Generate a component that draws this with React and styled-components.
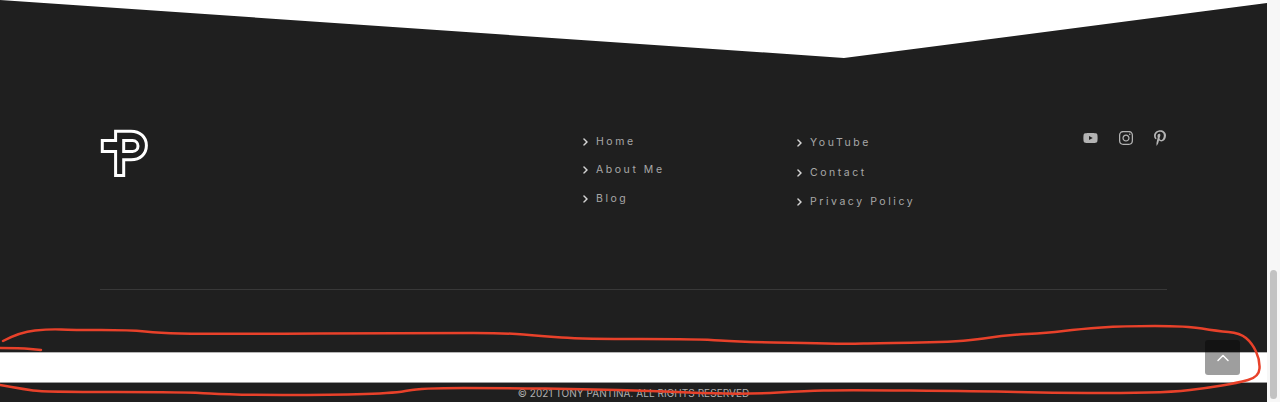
import React from "react";
import styled, { createGlobalStyle } from "styled-components";
import { FaYoutube, FaPinterestP, FaInstagram } from "react-icons/fa";
import { FaChevronRight } from "react-icons/fa6";
import { ChevronUp } from "lucide-react";

const Global = createGlobalStyle`
  html, body { margin: 0; padding: 0; height: 402px; overflow: hidden; background: #fff; }
  #root { height: 402px; }
  a { text-decoration: none; color: inherit; }
`;

const Page = styled.div`
  position: relative;
  display: flex;
  width: 1280px;
  height: 402px;
  overflow: hidden;
  font-family: Inter, "Liberation Sans", sans-serif;
`;
const Main = styled.div`
  width: 1267px;
  display: flex;
  flex-direction: column;
`;
const Footer = styled.footer`
  height: 352px;
  box-sizing: border-box;
  padding: 127px 100px 0;
  background: #1f1f1f;
  clip-path: polygon(0 0, 844px 58px, 100% 3px, 100% 100%, 0 100%);
  display: flex;
  flex-direction: column;
`;
const Columns = styled.div`
  display: grid;
  grid-template-columns: 482px 214px 1fr auto;
  height: 162px;
  border-bottom: 1px solid #383838;
`;
const Logo = styled.svg`
  display: block;
  width: 50px;
  height: 50px;
  margin-top: 2px;
`;
const LinkList = styled.ul`
  list-style: none;
  margin: 0;
  padding: ${(p) => p.$top}px 0 0;
  display: flex;
  flex-direction: column;
  gap: ${(p) => p.$gap}px;
`;
const LinkItem = styled.li`
  display: flex;
  align-items: center;
  gap: 8px;
  height: 14px;
  font-size: 10.5px;
  line-height: 14px;
  letter-spacing: 2.55px;
  color: #a8a8a8;
  font-weight: 400;
  white-space: nowrap;
  svg {
    width: 6px;
    height: 8px;
    color: #e8e8e8;
    flex: none;
    stroke: currentColor;
    stroke-width: 30;
  }
`;
const Social = styled.div`
  display: flex;
  align-items: flex-start;
  gap: 21px;
  padding: 3px 1px 0 0;
  color: #b3b3b3;
`;
const SocialIcon = styled.a`
  display: block;
  height: 16px;
  svg { display: block; width: ${(p) => p.$w}px; height: 16px; }
`;
const Band = styled.div`
  height: 31px;
  background: #fff;
  border-top: 1px solid #b5b5b5;
  border-bottom: 1px solid #9a9a9a;
  box-sizing: border-box;
`;
const Bottom = styled.div`
  height: 19px;
  background: #1f1f1f;
  display: flex;
  justify-content: center;
  padding-top: 3px;
  box-sizing: border-box;
`;
const Copy = styled.div`
  font-size: 10px;
  line-height: 14px;
  letter-spacing: 0.05px;
  color: #b0b0b0;
  white-space: nowrap;
`;
const Scrollbar = styled.div`
  width: 13px;
  height: 402px;
  box-sizing: border-box;
  padding: 270px 3px 3px;
  background: #f7f7f7;
`;
const Thumb = styled.div`
  width: 7px;
  height: 129px;
  border-radius: 4px;
  background: #c2c2c2;
`;
const TopButton = styled.button`
  position: absolute;
  left: 1205px;
  top: 340px;
  width: 35px;
  height: 35px;
  padding: 0;
  border: 0;
  border-radius: 3px;
  background: rgba(0, 0, 0, 0.38);
  color: #fff;
  display: flex;
  align-items: center;
  justify-content: center;
`;
const Ink = styled.svg`
  position: absolute;
  left: 0;
  top: 0;
  pointer-events: none;
`;

const main = [[3,341],[20,332],[50,329],[72,330],[130,330],[160,333],[200,334],[440,333],[507,333],[540,336],[583,339],[700,339],[740,342],[807,343],[847,344],[880,343],[960,342],[1007,335],[1047,333],[1080,329],[1123,326],[1187,326],[1217,331],[1240,333],[1252,343],[1260,360],[1259,377],[1237,383],[1207,388],[1173,392],[1123,393],[1053,393],[980,391],[840,390],[807,391],[750,394],[700,393],[653,391],[583,389],[507,388],[420,388],[397,393],[333,395],[233,395],[187,392],[43,392],[23,389],[0,385]];
const stub = [[0,348],[20,348],[41,350]];

const smooth = (pts) => {
  let d = `M${pts[0][0]} ${pts[0][1]}`;
  for (let i = 1; i < pts.length - 1; i++) {
    const mx = (pts[i][0] + pts[i + 1][0]) / 2;
    const my = (pts[i][1] + pts[i + 1][1]) / 2;
    d += ` Q${pts[i][0]} ${pts[i][1]} ${mx} ${my}`;
  }
  const l = pts[pts.length - 1];
  return d + ` L${l[0]} ${l[1]}`;
};

const col1 = ["Home", "About Me", "Blog"];
const col2 = ["YouTube", "Contact", "Privacy Policy"];

const Links = ({ items, top, gap }) => (
  <LinkList $top={top} $gap={gap}>
    {items.map((t) => (
      <LinkItem key={t}>
        <FaChevronRight />
        <a href="#">{t}</a>
      </LinkItem>
    ))}
  </LinkList>
);

export default function App() {
  return (
    <Page>
      <Global />
      <Main>
        <Footer>
          <Columns>
            <div>
              <Logo viewBox="0 0 50 50" fill="none" stroke="#fff" strokeWidth="3">
                <path d="M2.3 11.6H15.6V2.3H31C40 2.3 46.4 8 46.4 16.5C46.4 25 40 30.7 31 30.7H23.7V46.4H15.6V22.4H2.3Z" />
                <path d="M23.7 11.6H32.5C36 11.6 38 14 38 17C38 20 36 22.4 32.5 22.4H23.7Z" />
              </Logo>
            </div>
            <Links items={col1} top={8.2} gap={14.25} />
            <Links items={col2} top={9} gap={15.5} />
            <Social>
              <SocialIcon $w={15}><FaYoutube /></SocialIcon>
              <SocialIcon $w={14}><FaInstagram /></SocialIcon>
              <SocialIcon $w={12}><FaPinterestP /></SocialIcon>
            </Social>
          </Columns>
        </Footer>
        <Band />
        <Bottom>
          <Copy>© 2021 TONY PANTINA. ALL RIGHTS RESERVED</Copy>
        </Bottom>
      </Main>
      <Scrollbar><Thumb /></Scrollbar>
      <TopButton aria-label="Back to top"><ChevronUp size={20} strokeWidth={1.75} /></TopButton>
      <Ink width="1280" height="402" fill="none" stroke="#e8412a" strokeWidth="2.5" strokeLinecap="round">
        <path d={smooth(main)} />
        <path d={smooth(stub)} />
      </Ink>
    </Page>
  );
}
